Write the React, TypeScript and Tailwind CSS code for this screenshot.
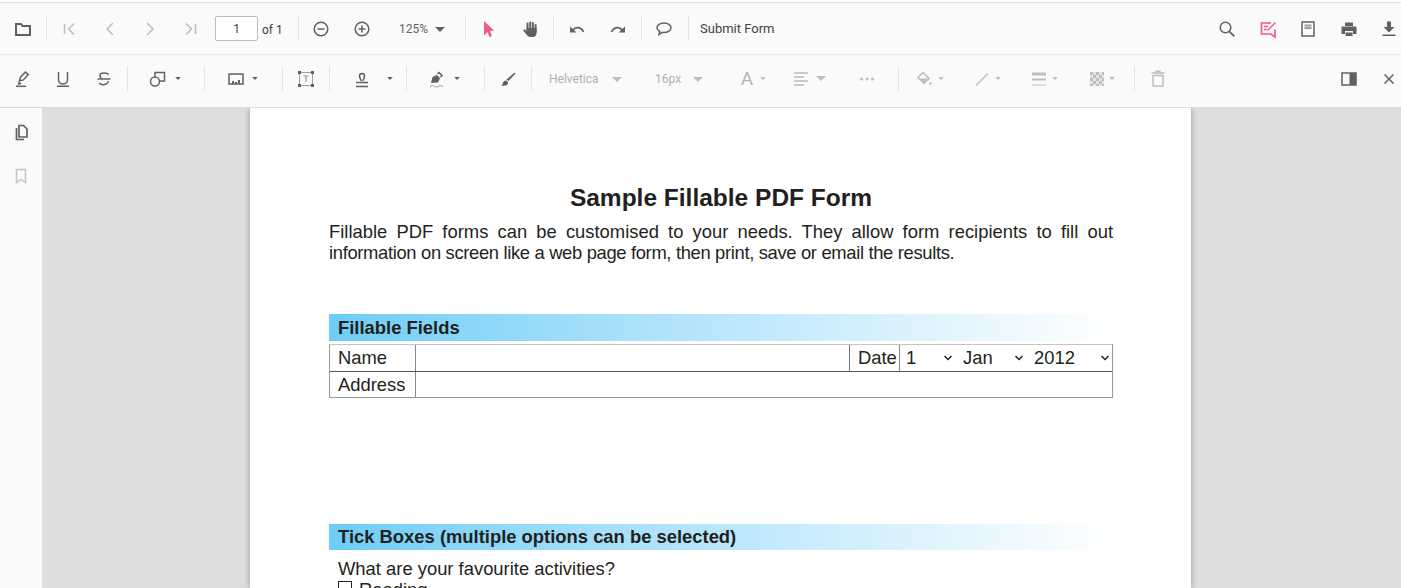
import type { ReactNode } from 'react'

const DARK = '#616161'
const MUTED = '#bdbdbd'
const PINK = '#ee5a86'

function Icon({ children, className = '', color = DARK }: { children: ReactNode; className?: string; color?: string }) {
  return (
    <svg
      viewBox="0 0 20 20"
      fill="none"
      stroke={color}
      strokeWidth="1.5"
      className={`h-5 w-5 shrink-0 ${className}`}
    >
      {children}
    </svg>
  )
}

function Sep({ className = '' }: { className?: string }) {
  return <div className={`h-[25px] w-px shrink-0 bg-[#e4e4e4] ${className}`} />
}

function Caret({ className = '', color = DARK, small = false }: { className?: string; color?: string; small?: boolean }) {
  return (
    <svg viewBox="0 0 10 5" fill={color} className={`h-[5px] shrink-0 ${small ? 'w-2' : 'w-2.5'} ${className}`}>
      <path d={small ? 'M1.5 .5h7L5 4.5z' : 'M0 0h10L5 5z'} />
    </svg>
  )
}

function Chevron({ className = '' }: { className?: string }) {
  return (
    <svg viewBox="0 0 10 6" fill="none" stroke="#222" strokeWidth="1.5" className={`h-[6px] w-[10px] shrink-0 ${className}`}>
      <path d="M1.5 1l3.5 3.5L8.5 1" />
    </svg>
  )
}

function TopBar() {
  return (
    <div className="h-[52px] border-b border-[#e8e8e8] pt-[13px]">
      <div className="flex h-[25px] items-center pl-[13px]">
        <Icon>
          <path d="M3 5h5l1.500 2H17v9H3z" strokeWidth="2" />
        </Icon>
        <Sep className="ml-[13px]" />
        <Icon className="ml-[12px]" color={MUTED}><path d="M5.500 5v10M15 4.500L9.500 10l5.500 5.500" /></Icon>
        <Icon className="ml-[21px]" color={MUTED}><path d="M13 4l-6 6 6 6" /></Icon>
        <Icon className="ml-[20px]" color={MUTED}><path d="M7 4l6 6-6 6" /></Icon>
        <Icon className="ml-[21px]" color={MUTED}><path d="M14.500 5v10M5 4.500l5.500 5.500L5 15.500" /></Icon>
        <div className="ml-[14px] flex h-[25px] w-[43px] items-center justify-center rounded-[2px] border border-[#bdbdbd] bg-white text-[12px] text-[#424242]">
          1
        </div>
        <div className="ml-[4px] mt-[2px] w-[21px] whitespace-nowrap text-[12px] text-[#424242]">of 1</div>
        <Sep className="ml-[15px]" />
        <Icon className="ml-[12px]"><circle cx="10" cy="10" r="6.800" /><path d="M6.500 10h7" /></Icon>
        <Icon className="ml-[21px]"><circle cx="10" cy="10" r="6.800" /><path d="M6.500 10h7M10 6.500v7" /></Icon>
        <div className="ml-[27px] w-[30px] text-[12px] text-[#616161]">125%</div>
        <Caret className="ml-[6px] mt-[2px]" />
        <Sep className="ml-[20px]" />
        <Icon className="ml-[13px]" color={PINK}>
          <path d="M5 2l10 9.500-4 .5 2 5-2.500 1-2-5L5 16.500z" fill={PINK} stroke="none" />
        </Icon>
        <Icon className="ml-[21px]">
          <g fill={DARK} stroke="none">
            <rect x="6.500" y="3.500" width="2" height="9" rx="1" />
            <rect x="9.200" y="2.500" width="2" height="10" rx="1" />
            <rect x="11.900" y="3" width="2" height="10" rx="1" />
            <rect x="14.600" y="5" width="2" height="9" rx="1" />
            <path d="M6.500 9h10v5c0 2.500-1.500 4-4 4h-2c-2 0-3-1-4-2.500l-3-3.500c-.6-1 .6-1.800 1.500-1.200L6.500 12z" />
          </g>
        </Icon>
        <Sep className="ml-[13px]" />
        <Icon className="ml-[13px]">
          <path d="M6 11c2.500-3.500 8-3.500 10.500 2" strokeWidth="1.800" />
          <path d="M3 7.500v6h6.500z" fill={DARK} stroke="none" />
        </Icon>
        <Icon className="ml-[21px]">
          <path d="M14 11c-2.500-3.500-8-3.500-10.500 2" strokeWidth="1.800" />
          <path d="M17 7.500v6h-6.500z" fill={DARK} stroke="none" />
        </Icon>
        <Sep className="ml-[13px]" />
        <Icon className="ml-[12px]">
          <path d="M10 4c3.900 0 7 2.200 7 4.800s-3.100 4.800-7 4.800c-.7 0-1.300 0-1.900-.2L5 15.500l.7-3C4 11.600 3 10.300 3 8.800 3 6.200 6.100 4 10 4z" />
        </Icon>
        <Sep className="ml-[14px]" />
        <div className="ml-[11px] whitespace-nowrap text-[13px] text-[#424242]">Submit Form</div>
        <div className="ml-auto flex items-center gap-[20.500px] pr-[2px]">
          <Icon><circle cx="8.500" cy="8.500" r="5.300" /><path d="M12.300 12.300l5 5" strokeWidth="1.800" /></Icon>
          <Icon color={PINK}>
            <path d="M13 4H3.500v11H13l4 3v-7.500" strokeWidth="1.700" />
            <path d="M6 7.500h4M6 10.500h3M9.500 11.500l8-8" strokeWidth="1.500" />
          </Icon>
          <Icon>
            <rect x="4" y="3" width="12" height="14" />
            <path d="M6.500 6.500h7M6.500 9h7" stroke="#9e9e9e" strokeWidth="1.800" />
          </Icon>
          <Icon>
            <path d="M6 3.500h8V7H6zM2.500 7.500h15v7.500H14v-3H6v3H2.500zM6.500 13.500h7V17h-7z" fill={DARK} stroke="none" />
          </Icon>
          <Icon>
            <path d="M8 2.500h4V8h3.500L10 13.500 4.500 8H8zM3.500 15.500h13V17h-13z" fill={DARK} stroke="none" />
          </Icon>
        </div>
      </div>
    </div>
  )
}

function AnnotationBar() {
  return (
    <div className="h-[53px] border-b border-[#dedede] pt-[11px]">
      <div className="flex h-[25px] items-center pl-[12px]">
        <Icon>
          <path d="M7.500 12l1-3.800 5-5.200 2.800 2.600-5 5.300z" />
          <path d="M6.800 12.500l-1.300 3.800 4.300-1.500z" fill={DARK} stroke="none" />
          <path d="M4 17.300h10" />
        </Icon>
        <Icon className="ml-[21px]"><path d="M5.500 3v7.500a4.500 4.500 0 009 0V3M4 17.200h12" /></Icon>
        <Icon className="ml-[21px]"><path d="M14.500 5.500C13.500 3.800 6 3 6 6.500c0 1 .5 1.800 1.500 2.500M3.500 10h13M14 12c.8 3.500-6.500 5-8.800 2" /></Icon>
        <Sep className="ml-[13px]" />
        <Icon className="ml-[20px]"><circle cx="7" cy="12.500" r="4.500" /><path d="M7 8V3.500h9.500V12H11.500" /></Icon>
        <Caret className="ml-[6px]" small />
        <Sep className="ml-[22px]" />
        <Icon className="ml-[21px]">
          <rect x="3" y="5" width="14" height="10" />
          <path d="M6 15v-3h2v3M9 15v-2h2v2M12 15v-4h2v4" fill={DARK} stroke="none" />
        </Icon>
        <Caret className="ml-[5px]" small />
        <Sep className="ml-[23px]" />
        <Icon className="ml-[13px]">
          <path d="M3.500 3.500h13v13h-13z" strokeWidth="1" stroke="#9e9e9e" />
          <path d="M2 2h3v3H2zM15 2h3v3h-3zM2 15h3v3H2zM15 15h3v3h-3z" fill={DARK} stroke="none" />
          <path d="M7.500 7h5M10 7v6" stroke="#9e9e9e" strokeWidth="1.200" />
        </Icon>
        <Sep className="ml-[13px]" />
        <Icon className="ml-[22px]">
          <path d="M9 12c0-2-1.500-2.500-1.500-5a2.500 2.500 0 015 0c0 2.500-1.500 3-1.500 5M4 13.500h12M4 17.500h12" />
        </Icon>
        <Caret className="ml-[14px]" small />
        <Sep className="ml-[12px]" />
        <Icon className="ml-[20px]">
          <path d="M4 14l1.500-6 4.500-2 3 3-2 4.500z" fill={DARK} stroke="none" />
          <path d="M10.500 5l1.500-1.500 3 3L13.500 8" />
          <path d="M3 17.500c2-1.500 3-1 4.500 0s3 .5 4.500-.5 2.500 0 4 .5" stroke="#9e9e9e" strokeWidth="1" />
        </Icon>
        <Caret className="ml-[6px]" small />
        <Sep className="ml-[23px]" />
        <Icon className="ml-[13px]">
          <path d="M16.500 3.500l1 1-7 7.500-2-1.500z" fill={DARK} stroke="none" />
          <path d="M7.500 11.500c1.500 0 2.500 1 2.500 2.500 0 2-2.500 3-6.500 3 1.500-1 1-2.500 1.500-3.500s1.500-2 2.500-2z" fill={DARK} stroke="none" />
        </Icon>
        <Sep className="ml-[13px]" />
        <div className="ml-[17px] w-[49px] whitespace-nowrap text-[12px] text-[#b0b0b0]">Helvetica</div>
        <Caret className="ml-[14px] mt-[2px]" color={MUTED} />
        <div className="ml-[33px] w-[25px] whitespace-nowrap text-[12px] text-[#b0b0b0]">16px</div>
        <Caret className="ml-[13px] mt-[2px]" color={MUTED} />
        <div className="ml-[34px] mt-[2px] flex h-5 w-5 items-center justify-center text-[19px] text-[#b5b5b5]">A</div>
        <Caret className="ml-[2px]" color={MUTED} small />
        <Icon className="ml-[24px]" color={MUTED}><path d="M3 4h14M3 8h10M3 12h14M3 16h10" /></Icon>
        <Caret className="ml-[5px]" color={MUTED} />
        <Icon className="ml-[31px]" color={MUTED}>
          <g fill={MUTED} stroke="none"><circle cx="4.500" cy="10" r="1.500" /><circle cx="10" cy="10" r="1.500" /><circle cx="15.500" cy="10" r="1.500" /></g>
        </Icon>
        <Sep className="ml-[21px]" />
        <Icon className="ml-[15px]" color={MUTED}>
          <path d="M9 3.500l6 6-5 5-6-6zM8 3l1 1" />
          <path d="M5 9.500h9l-4 4.500z" fill={MUTED} stroke="none" />
          <circle cx="16.500" cy="14.500" r="1.300" fill={MUTED} stroke="none" />
        </Icon>
        <Caret className="ml-[3px]" color={MUTED} small />
        <Icon className="ml-[27px]" color={MUTED}><path d="M4 16.500L16 4.500" /></Icon>
        <Caret className="ml-[2px]" color={MUTED} small />
        <Icon className="ml-[27px]" color={MUTED}>
          <path d="M3 3.500h14V6.500H3zM3 9.500h14v2H3z" fill={MUTED} stroke="none" />
          <path d="M3 16h14" strokeWidth="1" />
        </Icon>
        <Caret className="ml-[2px]" color={MUTED} small />
        <Icon className="ml-[28px]" color={MUTED}>
          <g fill={MUTED} stroke="none">
            <path d="M3 3h3v3H3zM9 3h3v3H9zM15 3h2v3h-2zM6 6h3v3H6zM12 6h3v3h-3zM3 9h3v3H3zM9 9h3v3H9zM15 9h2v3h-2zM6 12h3v3H6zM12 12h3v3h-3zM3 15h3v2H3zM9 15h3v2H9zM15 15h2v2h-2z" />
          </g>
          <path d="M3 3h14v14H3z" fill={MUTED} fillOpacity="0.35" stroke="none" />
        </Icon>
        <Caret className="ml-[1px]" color={MUTED} small />
        <Sep className="ml-[18px]" />
        <Icon className="ml-[13px]" color={MUTED}>
          <path d="M5 6.500h10v10.500H5zM3.500 4h13M8 3.500V2.300h4v1.200" />
        </Icon>
        <div className="ml-auto flex items-center gap-[20.500px] pr-[2px]">
          <Icon>
            <rect x="3" y="4" width="14" height="12" strokeWidth="1.500" />
            <path d="M10.500 4H17v12h-6.500z" fill={DARK} stroke="none" />
          </Icon>
          <Icon><path d="M5.500 5.500l9 9M14.500 5.500l-9 9" /></Icon>
        </div>
      </div>
    </div>
  )
}

function Sidebar() {
  return (
    <div className="flex w-[42px] shrink-0 flex-col items-center bg-[#fafafa] pt-[14px]">
      <Icon>
        <path d="M8 3.500h4.500L16 7v8H8z" strokeWidth="1.700" />
        <path d="M5.500 6v11.500H13" strokeWidth="1.700" />
      </Icon>
      <Icon className="mt-[24px]" color="#c4c4c4">
        <path d="M5.500 3.500h9v13L10 13.500l-4.500 3z" />
      </Icon>
    </div>
  )
}

function SectionBar({ title, className = '' }: { title: string; className?: string }) {
  return (
    <div
      className={`flex items-center bg-gradient-to-r from-[#6ccdf6] to-white pl-[9px] text-[18.400px] font-bold text-[#231f20] ${className}`}
    >
      {title}
    </div>
  )
}

function PdfPage() {
  return (
    <div className="ml-[208px] h-[480px] w-[941px] overflow-hidden bg-white pl-[79px] pr-[78px] pt-[76px] text-[#231f20] shadow-[0_0_6px_rgba(0,0,0,0.35)]">
      <h1 className="text-center text-[24.500px] font-bold leading-[28px]">Sample Fillable PDF Form</h1>
      <p className="mt-[9px] text-[18.400px] leading-[21px]">
        <span className="block text-justify [text-align-last:justify]">
          Fillable PDF forms can be customised to your needs. They allow form recipients to fill out
        </span>
        <span className="block whitespace-nowrap tracking-[-0.34px]">
          information on screen like a web page form, then print, save or email the results.
        </span>
      </p>
      <SectionBar title="Fillable Fields" className="mt-[51px] h-[27px]" />
      <div className="mt-[3px] border border-[#999] border-t-[#c4c4c4] text-[18.400px] leading-[26px]">
        <div className="flex h-[27px] border-b border-[#555]">
          <div className="w-[86px] border-r border-[#888] pl-[8px]">Name</div>
          <div className="w-[434px] border-r border-[#777]" />
          <div className="w-[50px] whitespace-nowrap border-r border-[#888] pl-[8px]">Date</div>
          <div className="flex flex-1 items-center pl-[6px]">
            <span className="w-[37px]">1</span>
            <Chevron />
            <span className="ml-[10px] w-[51px]">Jan</span>
            <Chevron />
            <span className="ml-[10px] w-[66px]">2012</span>
            <Chevron />
          </div>
        </div>
        <div className="flex h-[25px]">
          <div className="w-[86px] border-r border-[#888] pl-[8px]">Address</div>
          <div className="flex-1" />
        </div>
      </div>
      <SectionBar title="Tick Boxes (multiple options can be selected)" className="mt-[126px] h-[26px]" />
      <div className="mt-[8px] pl-[9px] text-[18.400px] leading-[21px]">What are your favourite activities?</div>
      <div className="flex items-start pl-[9px] text-[18.400px] leading-[21px]">
        <div className="mt-[2px] h-[14px] w-[14px] shrink-0 border border-[#231f20]" />
        <span className="ml-[7px]">Reading</span>
      </div>
    </div>
  )
}

export default function App() {
  return (
    <div className="flex h-[588px] flex-col overflow-hidden bg-[#fafafa] font-['Roboto',sans-serif]">
      <div className="h-[3px] shrink-0 border-b border-[#e0e0e0] bg-white" />
      <TopBar />
      <AnnotationBar />
      <div className="flex min-h-0 flex-1">
        <Sidebar />
        <div className="min-w-0 flex-1 overflow-hidden bg-[#dedede] font-['Liberation_Sans',Arial,sans-serif]">
          <PdfPage />
        </div>
      </div>
    </div>
  )
}
